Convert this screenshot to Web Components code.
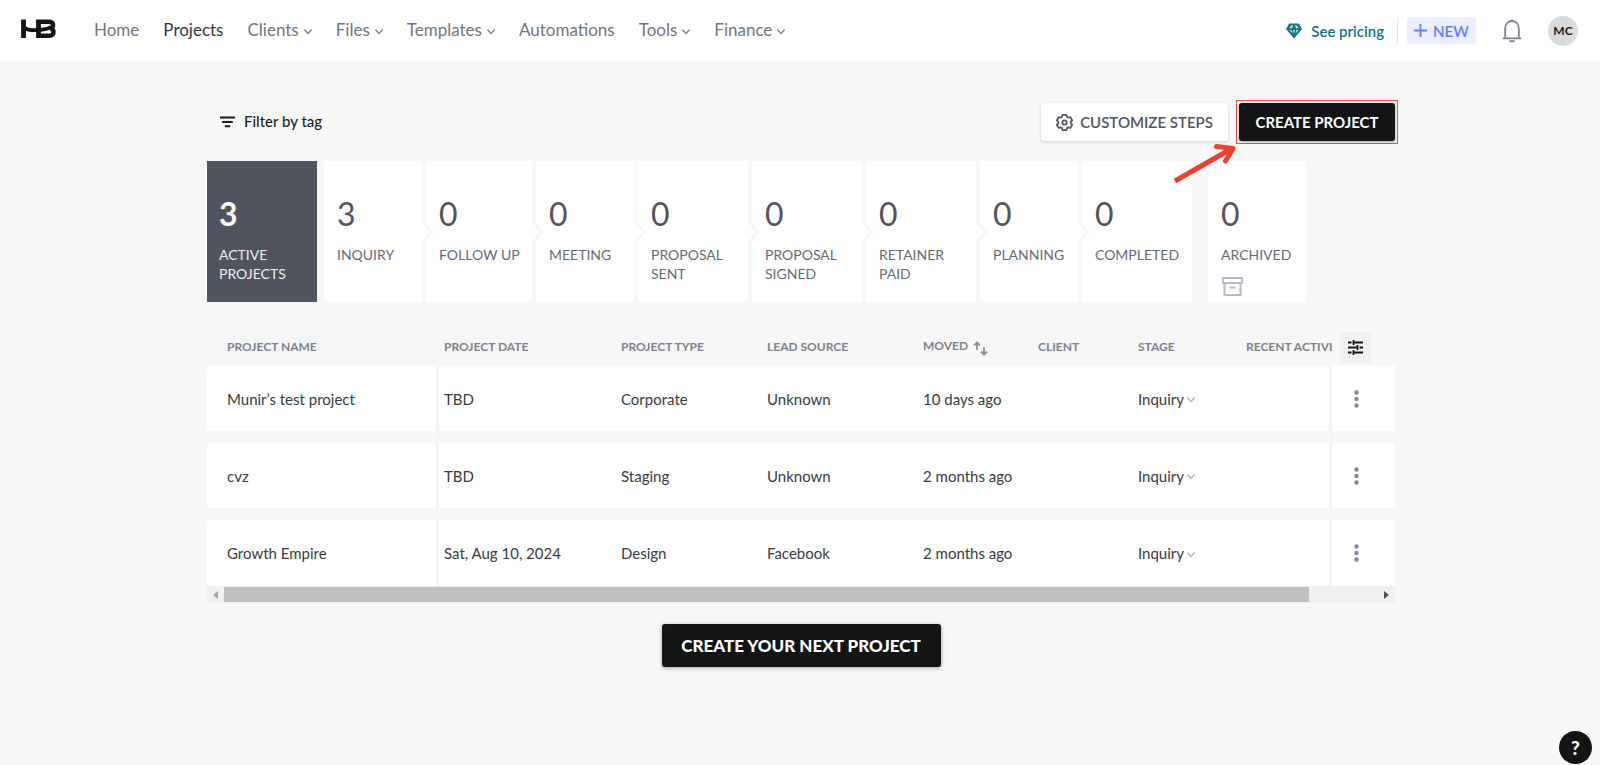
<!DOCTYPE html>
<html lang="en">
<head>
<meta charset="utf-8">
<title>Projects</title>
<style>
  :root {
    --ink: #131416;
    --slate: #50545f;
    --muted: #7e828c;
    --page: #f7f7f7;
    --teal: #137288;
    --blue: #5f7dfb;
  }
  body {
    margin: 0;
    min-height: 100vh;
    background: var(--page);
    color: #383b40;
    font-family: Lato, "Open Sans", "Liberation Sans", sans-serif;
    font-size: 15px;
  }
</style>
</head>
<body>
<projects-page></projects-page>

<script>
const base = `
  * { box-sizing: border-box; }
  button, select { font: inherit; color: inherit; background: none; border: 0; padding: 0; margin: 0; cursor: pointer; }
  svg { display: block; flex: none; }
`;

function define(name, markup, setup) {
  const template = document.createElement('template');
  template.innerHTML = markup;
  customElements.define(name, class extends HTMLElement {
    connectedCallback() {
      if (this.shadowRoot) return;
      const root = this.attachShadow({ mode: 'open' });
      root.append(template.content.cloneNode(true));
      if (setup) setup.call(this, root);
    }
  });
}

define('hb-chevron', `
  <style>:host { display: inline-block; } svg { display: block; }</style>
  <svg width="8" height="6" viewBox="0 0 8 6" fill="none" stroke="currentColor" stroke-width="1.5" stroke-linecap="round"><path d="M.8 1 4 4.5 7.2 1"/></svg>
`);

define('nav-item', `
  <style>${base}
    :host { display: block; color: #72767e; font-size: 17px; line-height: 20px; }
    :host([current]) { color: #34373c; }
    a, button { display: flex; align-items: center; gap: 5px; color: inherit; text-decoration: none; }
    hb-chevron { margin-top: 5px; color: #82858f; }
  </style>
`, function (root) {
  const menu = this.hasAttribute('menu');
  const el = document.createElement(menu ? 'button' : 'a');
  if (!menu) el.href = '#';
  if (this.hasAttribute('current')) el.setAttribute('aria-current', 'page');
  el.append(document.createElement('slot'));
  if (menu) el.append(document.createElement('hb-chevron'));
  root.append(el);
});

define('app-header', `
  <style>${base}
    :host { display: flex; align-items: center; height: 61px; padding: 0 22px 0 21px; background: #fff; }
    .logo { display: block; margin: 0 38px 4px 0; }
    nav { display: flex; gap: 24px; padding-bottom: 2px; }
    .right { display: flex; align-items: center; margin-left: auto; }
    .pricing { display: flex; align-items: center; gap: 9px; padding-right: 13px; color: var(--teal); font-weight: 600; font-size: 15px; line-height: 26px; text-decoration: none; border-right: 1px solid #e6e7ea; }
    .new { display: flex; align-items: center; justify-content: center; gap: 6px; width: 69px; height: 27px; margin-left: 9px; border-radius: 3px; background: #ebeefe; color: var(--blue); font-weight: 600; }
    .bell { margin: 0 26px; color: #7f8391; }
    .avatar { width: 30px; height: 30px; border-radius: 50%; background: #d9dade; color: #1b1c1f; font-size: 12px; font-weight: 700; }
  </style>
  <a class="logo" href="#" aria-label="Home page">
    <svg width="35" height="20" viewBox="0 0 35 20" fill="none" stroke="#131416">
      <path d="M2.500.5V19M17.500 4V19" stroke-width="4.800"/>
      <path d="M3 8.400c3.500 2.800 8 3 13 2.700 6-.3 10.500-.5 14-3.100" stroke-width="3.800"/>
      <path d="M15.100 2.700h12c3.600 0 5 1.100 5 3.300 0 1.800-1 2.900-2.800 3.300 2.300.4 3.200 1.700 3.200 3.600 0 2.800-1.800 3.900-5.400 3.900H17" stroke-width="4.400"/>
    </svg>
  </a>
  <nav aria-label="Main">
    <nav-item>Home</nav-item>
    <nav-item current>Projects</nav-item>
    <nav-item menu>Clients</nav-item>
    <nav-item menu>Files</nav-item>
    <nav-item menu>Templates</nav-item>
    <nav-item>Automations</nav-item>
    <nav-item menu>Tools</nav-item>
    <nav-item menu>Finance</nav-item>
  </nav>
  <div class="right">
    <a class="pricing" href="#">
      <svg width="16" height="16" viewBox="0 0 16 16"><path d="M3.200.5h9.600L16 6 8 15.500 0 6z" fill="#137288"/><path d="M5.200 2.600 3.500 5.200h2.300L7.200 2.600zM10.800 2.600l1.700 2.600h-2.300L8.800 2.600zM3.600 7l2.800 3.400L5.500 7zM12.400 7 9.600 10.400l.9-3.400zM7 7h2l-1 3.800z" fill="#fff" fill-opacity=".85"/></svg>
      See pricing</a>
    <button class="new"><svg width="13" height="13" viewBox="0 0 13 13" stroke="currentColor" stroke-width="1.800"><path d="M6.500 0v13M0 6.500h13"/></svg>NEW</button>
    <button class="bell" aria-label="Notifications">
      <svg width="20" height="24" viewBox="0 0 20 24"><path d="M3.200 18.700V9.400C3.200 5 6 2 10 2s6.800 3 6.800 7.400v9.300" fill="none" stroke="currentColor" stroke-width="1.800"/><path d="M.6 19.300h18.800M10 .4v2" stroke="currentColor" stroke-width="1.800"/><path d="M6.800 21.300h6.400c-.6 1.600-1.700 2.200-3.200 2.200s-2.600-.6-3.200-2.200z" fill="currentColor"/></svg>
    </button>
    <button class="avatar">MC</button>
  </div>
`);

define('project-toolbar', `
  <style>${base}
    :host { display: flex; align-items: center; justify-content: space-between; }
    .filter { display: flex; align-items: center; gap: 9px; margin-left: 13px; padding-bottom: 2px; color: #1c1d20; font-weight: 500; font-size: 15px; line-height: 20px; }
    .filter svg { margin-top: 2px; }
    .actions { display: flex; align-items: center; gap: 8px; margin-right: -3px; }
    .customize { display: flex; align-items: center; justify-content: center; gap: 7px; width: 187px; height: 38px; border-radius: 3px; background: #fff; box-shadow: 0 1px 3px #0000002e; color: var(--slate); font-weight: 600; }
    .highlight { position: relative; padding: 2px; border: 1px solid #ee5048; }
    .create { display: block; width: 156px; height: 38px; border-radius: 3px; background: var(--ink); box-shadow: 0 1px 3px #00000059; color: #fff; font-weight: 700; }
    .arrow { position: absolute; z-index: 2; right: 160px; top: 42px; }
  </style>
  <button class="filter">
    <svg width="15" height="12" viewBox="0 0 15 12" stroke="currentColor" stroke-width="1.900"><path d="M0 1.500h15M2.200 6h10.600M4.800 10.300h5.400"/></svg>
    Filter by tag
  </button>
  <div class="actions">
    <button class="customize">
      <svg width="17" height="17" viewBox="0 0 17 17" fill="none" stroke="currentColor" stroke-width="1.700" stroke-linejoin="round"><path d="M6.500.9h4l.5 2 1.200.7 2-.6 2 3.300-1.500 1.500v1.400l1.500 1.500-2 3.300-2-.6-1.200.7-.5 2h-4l-.5-2-1.200-.7-2 .6-2-3.300 1.500-1.500V7.800L.8 6.300l2-3.300 2 .6 1.200-.7z"/><circle cx="8.500" cy="8.500" r="2.200"/></svg>
      CUSTOMIZE STEPS
    </button>
    <div class="highlight">
      <button class="create">CREATE PROJECT</button>
      <svg class="arrow" width="64" height="42" viewBox="0 0 64 42" fill="none" stroke="#ee4031" stroke-width="5"><path d="M2 38 58 6"/><path d="M43.500 3.500 60 5.500 52.500 18" stroke-linecap="round" stroke-linejoin="round"/></svg>
    </div>
  </div>
`);

define('stage-card', `
  <style>${base}
    :host { display: block; position: relative; height: 141px; background: #fff; color: var(--slate); }
    button { display: flex; flex-direction: column; align-items: flex-start; justify-content: flex-start; width: 100%; height: 100%; padding: 33px 0 0 13px; text-align: left; }
    .count { font-size: 32px; line-height: 40px; margin-bottom: 11px; }
    .label { width: min-content; font-size: 14px; line-height: 19px; color: #666a73; }
    :host([oneline]) .label { white-space: nowrap; }
    :host([active]) { background: #50545f; color: #fff; }
    :host([active]) button { padding-left: 12px; }
    :host([active]) .count { font-weight: 700; }
    :host([active]) .label { color: #eeeef0; }
    .notch { position: absolute; z-index: 1; left: 100%; top: 61px; display: none; }
    :host([flows]) .notch { display: block; }
    ::slotted(svg) { display: block; margin: 13px 0 0 1px; }
  </style>
  <button>
    <span class="count"></span>
    <span class="label"></span>
    <slot></slot>
  </button>
  <svg class="notch" width="13" height="20" viewBox="0 0 13 20"><path d="M0 0 4 0 4 1 12 10 4 19 4 20 0 20z" fill="#f7f7f7"/><path d="M0 1v18L8 10z" fill="#fff"/></svg>
`, function (root) {
  root.querySelector('.count').textContent = this.getAttribute('count');
  root.querySelector('.label').textContent = this.getAttribute('label');
});

define('stage-pipeline', `
  <style>${base}
    :host { display: flex; gap: 4px; }
    stage-card { flex: 0 1 110px; }
    stage-card.narrow { flex-basis: 98px; }
    stage-card.medium { flex-basis: 106px; }
    .first { margin-right: 3px; }
    .last { margin-left: 12px; }
  </style>
  <stage-card class="first" active count="3" label="ACTIVE PROJECTS"></stage-card>
  <stage-card class="narrow" flows count="3" label="INQUIRY"></stage-card>
  <stage-card class="medium" flows oneline count="0" label="FOLLOW UP"></stage-card>
  <stage-card class="narrow" flows count="0" label="MEETING"></stage-card>
  <stage-card flows count="0" label="PROPOSAL SENT"></stage-card>
  <stage-card flows count="0" label="PROPOSAL SIGNED"></stage-card>
  <stage-card flows count="0" label="RETAINER PAID"></stage-card>
  <stage-card class="narrow" flows count="0" label="PLANNING"></stage-card>
  <stage-card count="0" label="COMPLETED"></stage-card>
  <stage-card class="narrow last" count="0" label="ARCHIVED">
    <svg width="21" height="19" viewBox="0 0 21 19" fill="none" stroke="#b7b9c4" stroke-width="2"><path d="M1 1h19v5H1zM2.500 6v12h16V6M7.500 10.500h6"/></svg>
  </stage-card>
`);

define('stage-select', `
  <style>${base}
    :host { display: block; }
    label { display: inline-flex; align-items: center; gap: 3px; }
    select { appearance: none; field-sizing: content; line-height: 20px; }
    hb-chevron { margin-top: 3px; color: #b4b6c0; }
  </style>
  <label><select aria-label="Stage"><option>Inquiry</option></select><hb-chevron></hb-chevron></label>
`);

const projects = [
  ['Munir’s test project', 'TBD', 'Corporate', 'Unknown', '10 days ago'],
  ['cvz', 'TBD', 'Staging', 'Unknown', '2 months ago'],
  ['Growth Empire', 'Sat, Aug 10, 2024', 'Design', 'Facebook', '2 months ago'],
];

define('project-table', `
  <style>${base}
    :host { display: block; }
    table { width: 100%; table-layout: fixed; border-collapse: separate; border-spacing: 0; }
    th { height: 38px; padding: 0 0 0 5px; overflow: hidden; text-align: left; white-space: nowrap; font-size: 12px; line-height: 16px; font-weight: 700; color: var(--muted); }
    th svg { display: inline-block; vertical-align: -6px; margin-left: 2px; }
    td { height: 77px; padding: 0 0 0 5px; background: #fff; background-clip: padding-box; border-bottom: 12px solid transparent; font-size: 15px; line-height: 20px; }
    tr:last-child td { height: 66px; border-bottom: 0; }
    th:first-child, td:first-child { padding-left: 20px; }
    th:first-child { background: #f5f6f8; }
    td:first-child { border-right: 3px solid #f3f3f4; border-radius: 3px 0 0 3px; }
    td:nth-last-child(2) { border-right: 3px solid #f3f3f4; }
    td:last-child { padding-left: 16px; }
    th:last-child { padding-left: 8px; }
    .columns { display: grid; place-items: center; width: 31px; height: 31px; border-radius: 3px; background: #eff0f1; color: #131416; }
    .columns svg { margin: 0; }
    .more { display: grid; place-items: center; width: 16px; height: 24px; color: #85889a; }
    .bar { display: flex; align-items: center; height: 17px; background: #f0f0f0; }
    .bar button { display: grid; place-items: center; width: 17px; height: 17px; }
    .track { flex: 1; }
    .thumb { width: 94%; height: 15px; background: #c0c0c0; }
  </style>
  <table>
    <colgroup>
      <col style="width:232px"><col style="width:177px"><col style="width:146px"><col style="width:156px"><col style="width:115px"><col style="width:100px"><col style="width:108px"><col style="width:91px"><col style="width:63px">
    </colgroup>
    <thead><tr>
      <th>PROJECT NAME</th><th>PROJECT DATE</th><th>PROJECT TYPE</th><th>LEAD SOURCE</th>
      <th>MOVED <svg width="15" height="15" viewBox="0 0 15 15" fill="none" stroke="#8c8fa0" stroke-width="1.800"><path d="M4 9V1.500M1 4.500l3-3 3 3M11 6v7.500M8 10.500l3 3 3-3"/></svg></th>
      <th>CLIENT</th><th>STAGE</th><th>RECENT ACTIVITY</th>
      <th><button class="columns" aria-label="Choose columns"><svg width="15" height="15" viewBox="0 0 15 15" fill="none" stroke="currentColor" stroke-width="1.800"><path d="M0 2.500h3.500M6 2.500h9M0 7.500h8.500M11.500 7.500H15M0 12.500h3.500M6 12.500h9M5.500 0v5M9.500 5v5M5.500 10v5"/></svg></button></th>
    </tr></thead>
    <tbody></tbody>
  </table>
  <div class="bar">
    <button aria-label="Scroll left"><svg width="5" height="8" viewBox="0 0 5 8"><path d="M5 0v8L0 4z" fill="#a3a3a3"/></svg></button>
    <div class="track"><div class="thumb"></div></div>
    <button aria-label="Scroll right"><svg width="5" height="8" viewBox="0 0 5 8"><path d="M0 0v8l5-4z" fill="#505050"/></svg></button>
  </div>
`, function (root) {
  root.querySelector('tbody').innerHTML = projects.map(row => `
    <tr>${row.map(cell => `<td>${cell}</td>`).join('')}<td></td><td><stage-select></stage-select></td><td></td>
      <td><button class="more" aria-label="More actions"><svg width="5" height="18" viewBox="0 0 5 18" fill="currentColor"><circle cx="2.500" cy="2.500" r="2.200"/><circle cx="2.500" cy="9" r="2.200"/><circle cx="2.500" cy="15.500" r="2.200"/></svg></button></td>
    </tr>`).join('');
});

define('help-button', `
  <style>${base}
    :host { display: block; position: fixed; right: 8px; bottom: 1px; }
    button { display: block; width: 33px; height: 33px; border-radius: 50%; background: var(--ink); color: #fff; font-size: 19px; line-height: 33px; font-weight: 900; text-align: center; }
  </style>
  <button aria-label="Help">?</button>
`);

define('projects-page', `
  <style>${base}
    :host { display: block; }
    main { max-width: 1190px; margin: 0 auto; padding: 39px 0 40px 2px; }
    stage-pipeline { margin-top: 17px; }
    project-table { margin-top: 26px; }
    .next { display: block; width: 279px; height: 43px; margin: 21px auto 0; border-radius: 3px; background: var(--ink); box-shadow: 0 1px 4px #00000059; color: #fff; font-size: 17px; font-weight: 900; }
  </style>
  <app-header></app-header>
  <main>
    <project-toolbar></project-toolbar>
    <stage-pipeline></stage-pipeline>
    <project-table></project-table>
    <button class="next">CREATE YOUR NEXT PROJECT</button>
  </main>
  <help-button></help-button>
`);
</script>
</body>
</html>
